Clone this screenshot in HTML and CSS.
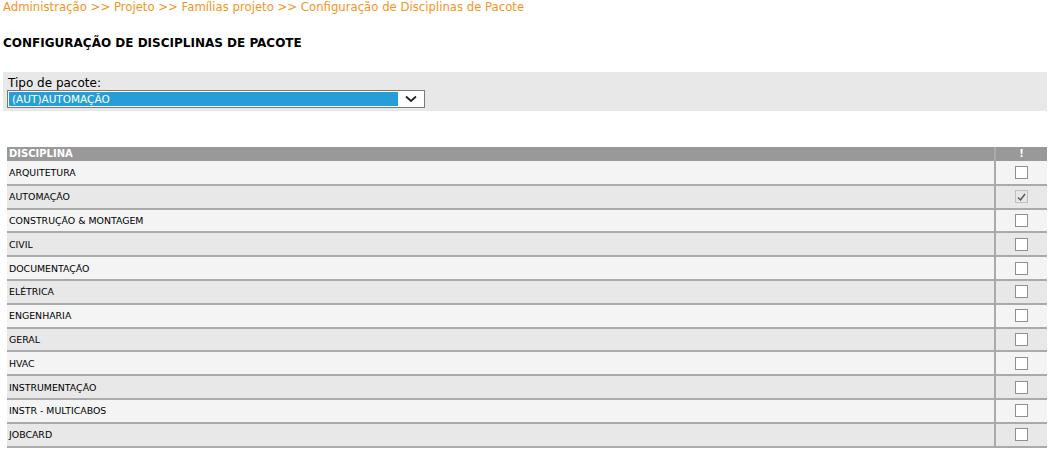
FILE: index.html
```html
<!DOCTYPE html>
<html lang="pt">
<head>
    <meta charset="UTF-8">
    <title>Configuração de Disciplinas de Pacote</title>
    <link rel="stylesheet" href="styles.css">
</head>
<body>
    <!-- Breadcrumb -->
    <div class="breadcrumb">Administração &gt;&gt; Projeto &gt;&gt; Famílias projeto &gt;&gt; Configuração de Disciplinas de Pacote</div>

    <h1 class="page-title">CONFIGURAÇÃO DE DISCIPLINAS DE PACOTE</h1>

    <!-- Filter -->
    <div class="filter-box">
        <label class="filter-label">Tipo de pacote:</label>
        <div class="select">
            <span class="select-value">(AUT)AUTOMAÇÃO</span>
            <span class="select-arrow">
                <svg width="12" height="8" viewBox="0 0 12 8"><path d="M1 1.5 L6 6 L11 1.5" fill="none" stroke="#222" stroke-width="1.8"/></svg>
            </span>
        </div>
    </div>

    <!-- Grid -->
    <table class="grid">
        <thead>
            <tr>
                <th class="col-name">DISCIPLINA</th>
                <th class="col-check">!</th>
            </tr>
        </thead>
        <tbody>
            <tr><td>ARQUITETURA</td><td class="col-check"><span class="check"></span></td></tr>
            <tr><td>AUTOMAÇÃO</td><td class="col-check"><span class="check checked">
                <svg width="9" height="8" viewBox="0 0 9 8"><path d="M1 4.5 L3.5 7 L8 1" fill="none" stroke="#555" stroke-width="1.4"/></svg>
            </span></td></tr>
            <tr><td>CONSTRUÇÃO &amp; MONTAGEM</td><td class="col-check"><span class="check"></span></td></tr>
            <tr><td>CIVIL</td><td class="col-check"><span class="check"></span></td></tr>
            <tr><td>DOCUMENTAÇÃO</td><td class="col-check"><span class="check"></span></td></tr>
            <tr><td>ELÉTRICA</td><td class="col-check"><span class="check"></span></td></tr>
            <tr><td>ENGENHARIA</td><td class="col-check"><span class="check"></span></td></tr>
            <tr><td>GERAL</td><td class="col-check"><span class="check"></span></td></tr>
            <tr><td>HVAC</td><td class="col-check"><span class="check"></span></td></tr>
            <tr><td>INSTRUMENTAÇÃO</td><td class="col-check"><span class="check"></span></td></tr>
            <tr><td>INSTR - MULTICABOS</td><td class="col-check"><span class="check"></span></td></tr>
            <tr><td>JOBCARD</td><td class="col-check"><span class="check"></span></td></tr>
        </tbody>
    </table>
</body>
</html>
```

FILE: styles.css
```css
* {
    margin: 0;
    padding: 0;
    box-sizing: border-box;
}

body {
    font-family: "DejaVu Sans", Verdana, sans-serif;
    background-color: #fff;
    color: #000;
    padding: 0 6px 0 3px;
}

.breadcrumb {
    color: #f7941d;
    font-size: 11.7px;
    line-height: 14px;
}

.page-title {
    font-size: 12px;
    font-weight: bold;
    line-height: 14px;
    margin-top: 22px;
}

.filter-box {
    margin-top: 22px;
    background-color: #e8e8e8;
    padding: 5px 4px 3px;
    height: 39px;
}

.filter-label {
    display: block;
    font-size: 12px;
    line-height: 13px;
    padding-left: 1px;
}

.select {
    display: flex;
    width: 418px;
    height: 18px;
    border: 1px solid #7a7a7a;
    background-color: #fff;
}

.select-value {
    flex: 1;
    background-color: #259ed8;
    color: #fff;
    font-size: 10.5px;
    line-height: 15px;
    padding-left: 3px;
    margin: 1px 0 1px 1px;
}

.select-arrow {
    width: 26px;
    display: flex;
    align-items: center;
    justify-content: center;
}

.grid {
    margin: 36px 0 0 4px;
    width: calc(100% - 4px);
    border-collapse: collapse;
    font-size: 9.4px;
}

.grid th {
    background-color: #999;
    color: #fff;
    font-size: 10px;
    font-weight: bold;
    text-align: left;
    height: 14px;
    line-height: 12px;
    padding: 0 2px;
}

.grid th.col-check {
    text-align: center;
}

.grid td {
    height: 23.8px;
    padding: 0 2px;
    border-bottom: 2px solid #aaa;
    background-color: #f4f4f4;
}

.grid tbody tr:nth-child(even) td {
    background-color: #e8e8e8;
}

.grid .col-name,
.grid td:first-child {
    border-right: 2px solid #aaa;
}

.grid .col-check {
    width: 52px;
    text-align: center;
}

.check {
    display: inline-flex;
    align-items: center;
    justify-content: center;
    width: 13px;
    height: 13px;
    border: 1px solid #8f8f8f;
    background-color: #fff;
    vertical-align: middle;
}

.check.checked {
    background-color: #e6e6e6;
    border-color: #c0c0c0;
}
```
